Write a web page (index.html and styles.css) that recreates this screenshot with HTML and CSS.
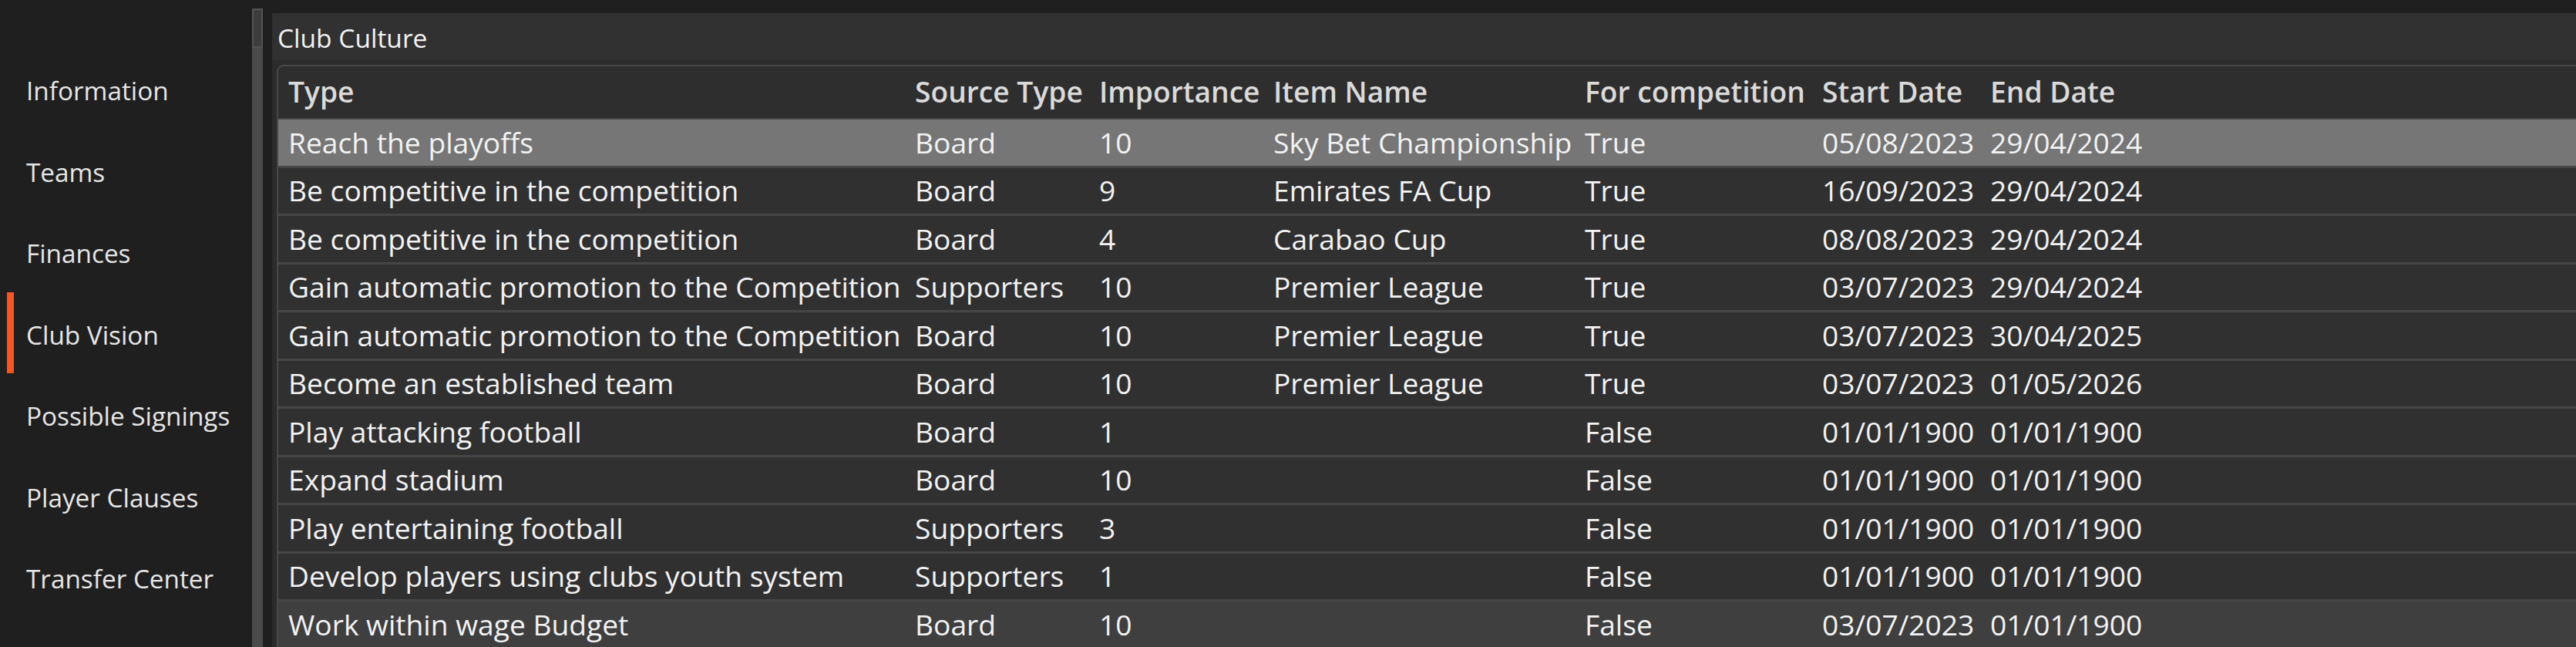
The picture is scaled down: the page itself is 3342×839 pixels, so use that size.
FILE: index.html
```html
<!DOCTYPE html>
<html lang="en">
<head>
<meta charset="utf-8">
<title>Club Vision</title>
<link rel="stylesheet" href="styles.css">
</head>
<body>
<div class="app">
  <nav class="sidebar">
    <div class="nav-item"><span class="nav-label">Information</span></div>
    <div class="nav-item"><span class="nav-label">Teams</span></div>
    <div class="nav-item"><span class="nav-label">Finances</span></div>
    <div class="nav-item active"><span class="nav-label">Club Vision</span></div>
    <div class="nav-item"><span class="nav-label">Possible Signings</span></div>
    <div class="nav-item"><span class="nav-label">Player Clauses</span></div>
    <div class="nav-item"><span class="nav-label">Transfer Center</span></div>
  </nav>
  <div class="scrollbar"><div class="thumb"></div></div>
  <main class="panel">
    <div class="panel-title">Club Culture</div>
    <div class="panel-body">
      <div class="grid">
        <div class="row head">
          <div class="cell">Type</div><div class="cell">Source Type</div><div class="cell">Importance</div><div class="cell">Item Name</div><div class="cell">For competition</div><div class="cell">Start Date</div><div class="cell">End Date</div><div class="cell"></div>
        </div>
        <div class="row selected">
          <div class="cell">Reach the playoffs</div><div class="cell">Board</div><div class="cell">10</div><div class="cell">Sky Bet Championship</div><div class="cell">True</div><div class="cell">05/08/2023</div><div class="cell">29/04/2024</div><div class="cell"></div>
        </div>
        <div class="row">
          <div class="cell">Be competitive in the competition</div><div class="cell">Board</div><div class="cell">9</div><div class="cell">Emirates FA Cup</div><div class="cell">True</div><div class="cell">16/09/2023</div><div class="cell">29/04/2024</div><div class="cell"></div>
        </div>
        <div class="row">
          <div class="cell">Be competitive in the competition</div><div class="cell">Board</div><div class="cell">4</div><div class="cell">Carabao Cup</div><div class="cell">True</div><div class="cell">08/08/2023</div><div class="cell">29/04/2024</div><div class="cell"></div>
        </div>
        <div class="row">
          <div class="cell">Gain automatic promotion to the Competition</div><div class="cell">Supporters</div><div class="cell">10</div><div class="cell">Premier League</div><div class="cell">True</div><div class="cell">03/07/2023</div><div class="cell">29/04/2024</div><div class="cell"></div>
        </div>
        <div class="row">
          <div class="cell">Gain automatic promotion to the Competition</div><div class="cell">Board</div><div class="cell">10</div><div class="cell">Premier League</div><div class="cell">True</div><div class="cell">03/07/2023</div><div class="cell">30/04/2025</div><div class="cell"></div>
        </div>
        <div class="row">
          <div class="cell">Become an established team</div><div class="cell">Board</div><div class="cell">10</div><div class="cell">Premier League</div><div class="cell">True</div><div class="cell">03/07/2023</div><div class="cell">01/05/2026</div><div class="cell"></div>
        </div>
        <div class="row">
          <div class="cell">Play attacking football</div><div class="cell">Board</div><div class="cell">1</div><div class="cell"></div><div class="cell">False</div><div class="cell">01/01/1900</div><div class="cell">01/01/1900</div><div class="cell"></div>
        </div>
        <div class="row">
          <div class="cell">Expand stadium</div><div class="cell">Board</div><div class="cell">10</div><div class="cell"></div><div class="cell">False</div><div class="cell">01/01/1900</div><div class="cell">01/01/1900</div><div class="cell"></div>
        </div>
        <div class="row">
          <div class="cell">Play entertaining football</div><div class="cell">Supporters</div><div class="cell">3</div><div class="cell"></div><div class="cell">False</div><div class="cell">01/01/1900</div><div class="cell">01/01/1900</div><div class="cell"></div>
        </div>
        <div class="row">
          <div class="cell">Develop players using clubs youth system</div><div class="cell">Supporters</div><div class="cell">1</div><div class="cell"></div><div class="cell">False</div><div class="cell">01/01/1900</div><div class="cell">01/01/1900</div><div class="cell"></div>
        </div>
        <div class="row hover">
          <div class="cell">Work within wage Budget</div><div class="cell">Board</div><div class="cell">10</div><div class="cell"></div><div class="cell">False</div><div class="cell">03/07/2023</div><div class="cell">01/01/1900</div><div class="cell"></div>
        </div>
      </div>
    </div>
  </main>
</div>
</body>
</html>
```

FILE: styles.css
```css
html, body {
  margin: 0;
  padding: 0;
  background: #1f1f1f;
  font-family: "Open Sans", "Noto Sans", sans-serif;
  color: #ececec;
}

.app {
  display: flex;
  height: 839px;
  overflow: hidden;
}

.sidebar {
  width: 327px;
  flex: none;
  display: flex;
  flex-direction: column;
  padding-top: 62.5px;
  box-sizing: border-box;
}

.nav-item {
  height: 105.5px;
  font-size: 33.3px;
  color: #e6e6e6;
  display: flex;
  align-items: center;
  white-space: nowrap;
}

.nav-label {
  padding-top: 4px;
}

.nav-item::before {
  content: "";
  width: 9px;
  height: 105px;
  margin-left: 9px;
  margin-right: 16px;
  background: transparent;
  flex: none;
}

.nav-item.active::before {
  background: #f85520;
}

.scrollbar {
  width: 14px;
  flex: none;
  margin-top: 11px;
  background: #4a4a4a;
}

.thumb {
  height: 51px;
  background: #3d3d3d;
  border: 2px solid #535353;
  box-sizing: border-box;
}

.panel {
  flex: 1;
  margin-left: 12px;
  margin-top: 17px;
  background: #2b2b2b;
  display: flex;
  flex-direction: column;
  min-width: 0;
}

.panel-title {
  height: 61px;
  flex: none;
  box-sizing: border-box;
  background: #313131;
  display: flex;
  align-items: center;
  padding-left: 7px;
  padding-top: 3px;
  font-size: 33.5px;
  color: #f2f2f2;
}

.panel-body {
  padding-top: 6px;
  padding-left: 6px;
}

.grid {
  border-top: 2px solid #484848;
  border-left: 2px solid #484848;
  border-top-left-radius: 9px;
  background: #2f2f2f;
  overflow: hidden;
}

.row {
  display: grid;
  grid-template-columns: 813px 239px 226px 404px 308px 218px 1fr;
  height: 59.5px;
  border-bottom: 3px solid #464646;
  background: #303030;
  font-size: 37.2px;
  color: #f2f2f2;
}

.row .cell {
  padding-top: 3px;
}

.row.head {
  height: 67px;
  border-bottom-width: 2px;
  background: #2e2e2e;
  color: #dadada;
  font-weight: 600;
}

.row.head .cell {
  padding-top: 6px;
}

.row.selected {
  background: #767676;
}

.row.hover {
  background: #3f3f3f;
}

.cell {
  padding-left: 13px;
  box-sizing: border-box;
  display: flex;
  align-items: center;
  white-space: nowrap;
  overflow: hidden;
}
```
